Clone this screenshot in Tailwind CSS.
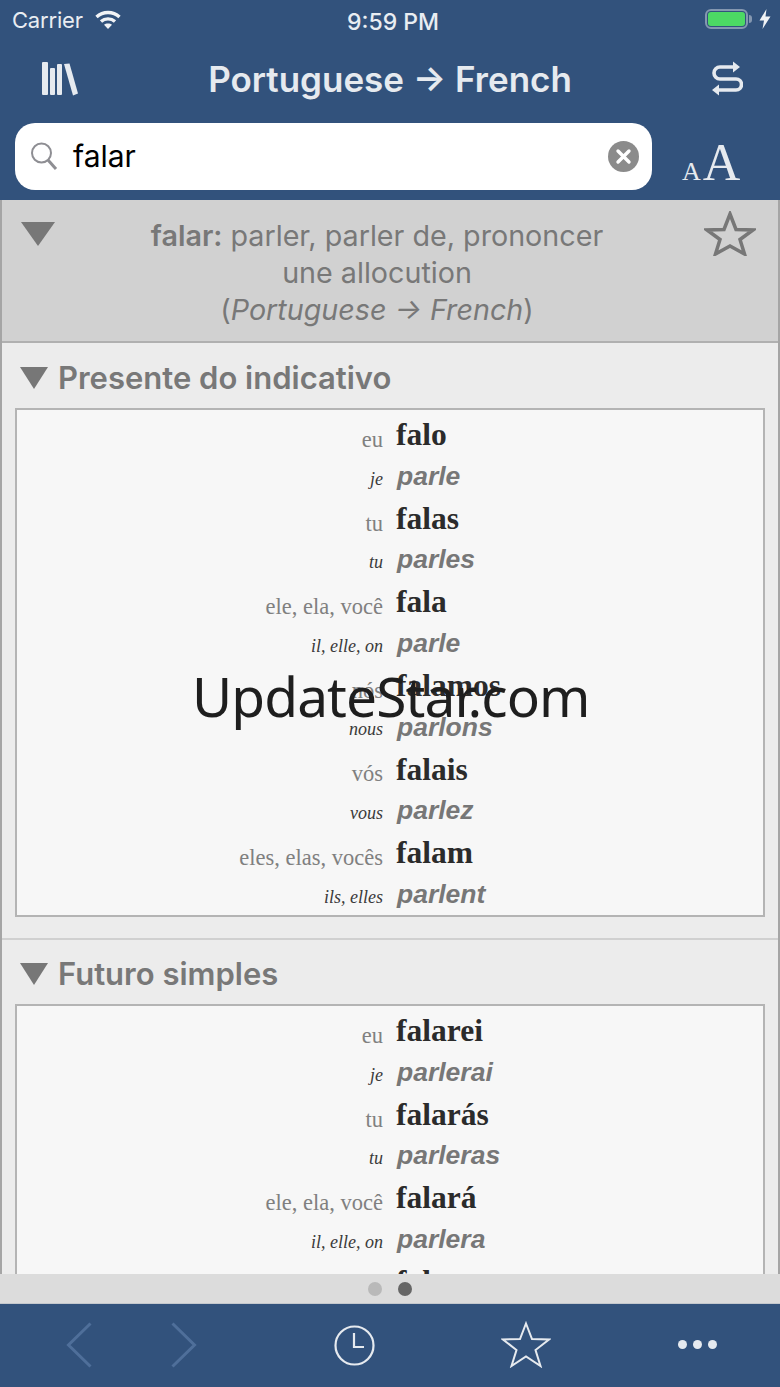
<!doctype html>
<html><head><meta charset="utf-8"><script src="https://cdn.jsdelivr.net/npm/@tailwindcss/browser@4"></script></head>
<body class="m-0">
<div class="relative w-[780px] h-[1387px] overflow-hidden flex flex-col bg-[#32527c] font-['Inter',sans-serif]">
  <!-- status bar -->
  <div class="h-10 shrink-0 relative flex items-center pl-3 text-[#e9edf2] text-[22px]">
    <span class="tracking-[-0.2px]">Carrier</span>
    <svg class="ml-[12px] -mt-[2px]" width="26" height="19" viewBox="0 0 26 19" fill="none" stroke="#f1f3f6" stroke-width="3.400"><path d="M1.500 7C8 1 18 1 24.500 7"/><path d="M6 11.500C10 8 16 8 20 11.500"/><path d="M13 19l-4-4.300C11 13.200 15 13.200 17 14.700z" fill="#f1f3f6" stroke="none"/></svg>
    <span class="absolute left-[347px] top-[5px] font-medium text-[23px]">9:59 PM</span>
    <div class="absolute left-[705px] top-[9px] flex items-center">
      <div class="w-[43px] h-[20px] rounded-[6px] border-2 border-[#8497b0] p-[1px]"><div class="w-full h-full rounded-[3px] bg-[#4cd964]"></div></div>
      <div class="w-[3px] h-[8px] ml-[1px] rounded-r-[3px] bg-[#8497b0]"></div>
      <svg class="ml-[7px]" width="12" height="20" viewBox="0 0 12 20"><path d="M7.500 0L0.500 11.500h4.500L3.500 20 11.500 7.500H6.500z" fill="#f1f3f6"/></svg>
    </div>
  </div>
  <!-- nav -->
  <div class="h-[83px] shrink-0 flex items-center pl-[42px] pr-[37px] text-[#e6eaef]">
    <svg width="37" height="34" viewBox="0 0 37 34" fill="#e6eaef" class="-mt-[5px] shrink-0"><rect x="0" y="0" width="6" height="33" rx="1"/><rect x="8" y="6" width="5" height="27" rx="1"/><rect x="15" y="2" width="5" height="31" rx="1"/><path d="M22 2l5.500-.5 8.500 30-5 2z"/></svg>
    <div class="flex-1 text-center text-[35px] font-semibold leading-none -mt-[5px] pr-[8px] whitespace-nowrap">Portuguese → French</div>
    <svg width="34" height="38" viewBox="0 0 34 38" class="-mt-[6px] shrink-0" fill="none" stroke="#e6eaef" stroke-width="3.600"><path d="M24 7H11a6 6 0 0 0 0 12h16a5.500 5.500 0 0 1 0 11H10"/><path d="M24 1.500l7 5.500-7 5.500zM10 24.500L3 30l7 5.500z" fill="#e6eaef" stroke="none"/></svg>
  </div>
  <!-- search -->
  <div class="h-[77px] shrink-0 flex items-start pl-[15px]">
    <div class="w-[637px] h-[67px] rounded-[20px] bg-white flex items-center pl-[15px] pr-[13px]">
      <svg width="28" height="28" viewBox="0 0 28 28" fill="none" stroke="#8e8e93" class="shrink-0 -mt-[1px]"><circle cx="11.500" cy="11" r="9.500" stroke-width="2"/><path d="M18 18l8 9" stroke-width="3"/></svg>
      <span class="ml-[15px] text-[30px] text-black leading-none -mt-[2px]">falar</span>
      <svg class="ml-auto" width="31" height="31" viewBox="0 0 31 31"><circle cx="15.500" cy="15.500" r="15.500" fill="#8b8b8b"/><path d="M10 10l11 11M21 10L10 21" stroke="#fff" stroke-width="3.400" stroke-linecap="round"/></svg>
    </div>
    <div class="ml-[30px] mt-[14px] flex items-baseline text-[#e6eaef] font-['Liberation_Serif',serif] leading-none"><span class="text-[26px]">A</span><span class="text-[52px] ml-[2px]">A</span></div>
  </div>
  <!-- content -->
  <div class="relative flex-1 min-h-0 overflow-hidden bg-[#ececec] border-x-2 border-[#a5a5a5]">
    <!-- header -->
    <div class="relative h-[143px] bg-[#d1d1d1] border-b-2 border-[#b0b0b0] text-center text-[#787878] text-[28.700px] leading-[37px] pt-[17px]">
      <svg class="absolute left-[19px] top-[22px]" width="34" height="24" viewBox="0 0 34 24"><path d="M0 0h34L17 24z" fill="#777"/></svg>
      <svg class="absolute left-[702px] top-[11px]" width="52" height="45" viewBox="0 0 52 45"><path d="M26 3l6 15.500L49 19 36 28.500 40.500 43 26 35 11.500 43 16 28.500 3 19l17-.5z" fill="none" stroke="#777" stroke-width="3.500"/></svg>
      <div class="w-[480px] ml-[135px]"><span class="font-semibold">falar:</span> parler, parler de, prononcer une allocution</div>
      <div class="pr-[26px]">(<span class="italic">Portuguese → French</span>)</div>
    </div>
    <!-- section 1 -->
    <div class="h-[597px] border-b-2 border-[#d0d0d0] bg-[#ececec] pt-[17px]">
      <div class="flex items-center pl-[18px] h-[34px] text-[#787878] text-[31px] font-semibold leading-none">
        <svg class="mr-[10px] mt-[2px]" width="28" height="22" viewBox="0 0 28 22"><path d="M0 0h28L14 22z" fill="#777"/></svg>Presente do indicativo
      </div>
      <div class="mx-[13px] mt-[14px] h-[509px] bg-[#f7f7f7] border-2 border-[#b4b4b4] pt-[4px]">
        <div class="grid grid-cols-[366px_1fr] gap-x-[13px] auto-rows-[41.800px] items-center">
          <div class="text-right font-['Liberation_Serif',serif] text-[#808080] text-[22.500px] pt-[10px]">eu</div><div class="font-['Liberation_Serif',serif] font-bold text-[#2b2b2b] text-[31.500px]">falo</div>
          <div class="text-right font-['Liberation_Serif',serif] italic text-[#3a3a3a] text-[18px] pt-[5px]">je</div><div class="font-['Liberation_Sans',sans-serif] font-bold italic text-[#777] text-[26.500px] pl-[1px]">parle</div>
          <div class="text-right font-['Liberation_Serif',serif] text-[#808080] text-[22.500px] pt-[10px]">tu</div><div class="font-['Liberation_Serif',serif] font-bold text-[#2b2b2b] text-[31.500px]">falas</div>
          <div class="text-right font-['Liberation_Serif',serif] italic text-[#3a3a3a] text-[18px] pt-[5px]">tu</div><div class="font-['Liberation_Sans',sans-serif] font-bold italic text-[#777] text-[26.500px] pl-[1px]">parles</div>
          <div class="text-right font-['Liberation_Serif',serif] text-[#808080] text-[22.500px] pt-[10px]">ele, ela, você</div><div class="font-['Liberation_Serif',serif] font-bold text-[#2b2b2b] text-[31.500px]">fala</div>
          <div class="text-right font-['Liberation_Serif',serif] italic text-[#3a3a3a] text-[18px] pt-[5px]">il, elle, on</div><div class="font-['Liberation_Sans',sans-serif] font-bold italic text-[#777] text-[26.500px] pl-[1px]">parle</div>
          <div class="text-right font-['Liberation_Serif',serif] text-[#808080] text-[22.500px] pt-[10px]">nós</div><div class="font-['Liberation_Serif',serif] font-bold text-[#2b2b2b] text-[31.500px]">falamos</div>
          <div class="text-right font-['Liberation_Serif',serif] italic text-[#3a3a3a] text-[18px] pt-[5px]">nous</div><div class="font-['Liberation_Sans',sans-serif] font-bold italic text-[#777] text-[26.500px] pl-[1px]">parlons</div>
          <div class="text-right font-['Liberation_Serif',serif] text-[#808080] text-[22.500px] pt-[10px]">vós</div><div class="font-['Liberation_Serif',serif] font-bold text-[#2b2b2b] text-[31.500px]">falais</div>
          <div class="text-right font-['Liberation_Serif',serif] italic text-[#3a3a3a] text-[18px] pt-[5px]">vous</div><div class="font-['Liberation_Sans',sans-serif] font-bold italic text-[#777] text-[26.500px] pl-[1px]">parlez</div>
          <div class="text-right font-['Liberation_Serif',serif] text-[#808080] text-[22.500px] pt-[10px]">eles, elas, vocês</div><div class="font-['Liberation_Serif',serif] font-bold text-[#2b2b2b] text-[31.500px]">falam</div>
          <div class="text-right font-['Liberation_Serif',serif] italic text-[#3a3a3a] text-[18px] pt-[5px]">ils, elles</div><div class="font-['Liberation_Sans',sans-serif] font-bold italic text-[#777] text-[26.500px] pl-[1px]">parlent</div>
        </div>
      </div>
    </div>
    <!-- section 2 -->
    <div class="bg-[#ececec] pt-[16px]">
      <div class="flex items-center pl-[18px] h-[34px] text-[#787878] text-[31px] font-semibold leading-none">
        <svg class="mr-[10px] mt-[2px]" width="28" height="22" viewBox="0 0 28 22"><path d="M0 0h28L14 22z" fill="#777"/></svg>Futuro simples
      </div>
      <div class="mx-[13px] mt-[14px] h-[400px] bg-[#f7f7f7] border-2 border-[#b4b4b4] pt-[4px]">
        <div class="grid grid-cols-[366px_1fr] gap-x-[13px] auto-rows-[41.800px] items-center">
          <div class="text-right font-['Liberation_Serif',serif] text-[#808080] text-[22.500px] pt-[10px]">eu</div><div class="font-['Liberation_Serif',serif] font-bold text-[#2b2b2b] text-[31.500px]">falarei</div>
          <div class="text-right font-['Liberation_Serif',serif] italic text-[#3a3a3a] text-[18px] pt-[5px]">je</div><div class="font-['Liberation_Sans',sans-serif] font-bold italic text-[#777] text-[26.500px] pl-[1px]">parlerai</div>
          <div class="text-right font-['Liberation_Serif',serif] text-[#808080] text-[22.500px] pt-[10px]">tu</div><div class="font-['Liberation_Serif',serif] font-bold text-[#2b2b2b] text-[31.500px]">falarás</div>
          <div class="text-right font-['Liberation_Serif',serif] italic text-[#3a3a3a] text-[18px] pt-[5px]">tu</div><div class="font-['Liberation_Sans',sans-serif] font-bold italic text-[#777] text-[26.500px] pl-[1px]">parleras</div>
          <div class="text-right font-['Liberation_Serif',serif] text-[#808080] text-[22.500px] pt-[10px]">ele, ela, você</div><div class="font-['Liberation_Serif',serif] font-bold text-[#2b2b2b] text-[31.500px]">falará</div>
          <div class="text-right font-['Liberation_Serif',serif] italic text-[#3a3a3a] text-[18px] pt-[5px]">il, elle, on</div><div class="font-['Liberation_Sans',sans-serif] font-bold italic text-[#777] text-[26.500px] pl-[1px]">parlera</div>
          <div class="text-right font-['Liberation_Serif',serif] text-[#808080] text-[22.500px] pt-[10px]">nós</div><div class="font-['Liberation_Serif',serif] font-bold text-[#2b2b2b] text-[31.500px]">falaremos</div>
        </div>
      </div>
    </div>
  </div>
  <!-- page dots -->
  <div class="h-[29px] shrink-0 bg-[#dcdcdc] flex items-center justify-center gap-[16px]">
    <span class="w-[14px] h-[14px] rounded-full bg-[#b9b9b9]"></span><span class="w-[14px] h-[14px] rounded-full bg-[#666]"></span>
  </div>
  <!-- toolbar -->
  <div class="h-[84px] shrink-0 bg-[#32527c] border-t border-[#c4c8cd]">
    <div class="h-full flex items-start pt-[18px] pl-[66px]">
      <svg width="26" height="46" viewBox="0 0 26 46" fill="none" stroke="#4f6f9a" stroke-width="3"><path d="M24.500 1.500L2.500 23l22 21.500"/></svg>
      <svg class="ml-[79px]" width="26" height="46" viewBox="0 0 26 46" fill="none" stroke="#4f6f9a" stroke-width="3"><path d="M1.500 1.500L23.500 23l-22 21.500"/></svg>
      <svg class="ml-[137px] mt-[3px]" width="41" height="41" viewBox="0 0 41 41" fill="none" stroke="#e6eaef" stroke-width="2.200"><circle cx="20.500" cy="20.500" r="19"/><path d="M20 8v14h10"/></svg>
      <svg class="ml-[126px] -mt-[1px]" width="50" height="47" viewBox="0 0 50 47" fill="none" stroke="#e6eaef" stroke-width="2"><path d="M25 2.500l6 15.500 17 .5-13.500 10.500 5 16L25 35.500 10.500 45l5-16L2 18.500l17-.5z"/></svg>
      <div class="ml-[127px] mt-[18px] flex gap-[6px]"><span class="w-[9px] h-[9px] rounded-full bg-[#e6eaef]"></span><span class="w-[9px] h-[9px] rounded-full bg-[#e6eaef]"></span><span class="w-[9px] h-[9px] rounded-full bg-[#e6eaef]"></span></div>
    </div>
  </div>
  <!-- watermark -->
  <div class="absolute left-[192px] top-[655px] text-[#1e1e1e] text-[55px] tracking-[-0.9px] leading-[82px] font-['Noto_Sans',sans-serif] whitespace-nowrap">UpdateStar.com</div>
</div>
</body></html>
